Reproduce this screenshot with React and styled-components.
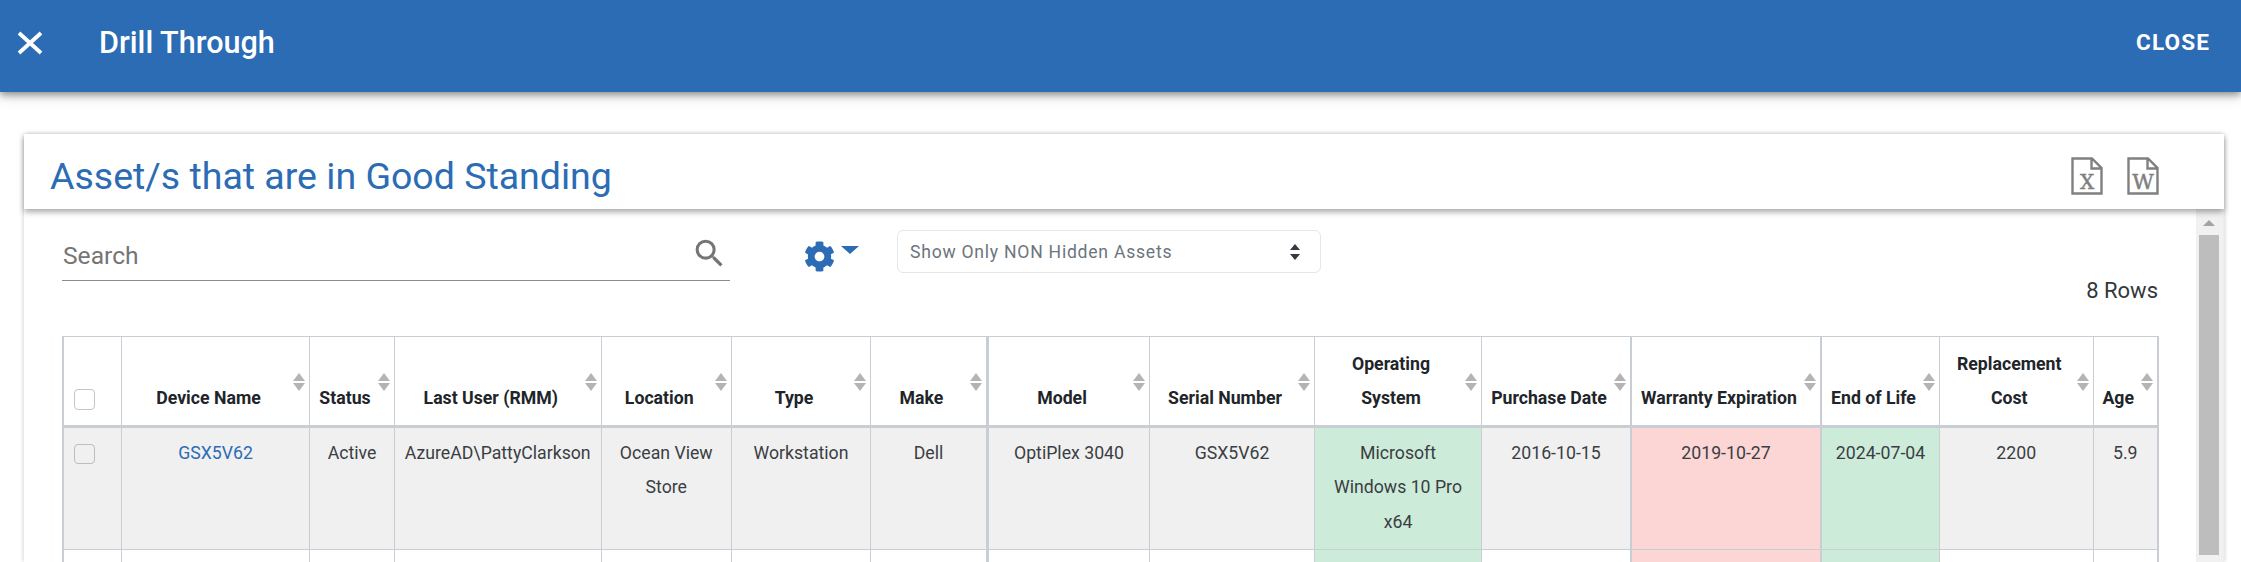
import React from "react";
import styled, { createGlobalStyle } from "styled-components";
import { MdSearch } from "react-icons/md";
import { FaCog } from "react-icons/fa";

const BLUE = "#2b6cb5";
const LINE = "#c9cdd4";

const Global = createGlobalStyle`
  html, body { margin: 0; padding: 0; background: #fff; overflow: hidden; }
  body { font-family: Roboto, "Liberation Sans", sans-serif; color: #212529; }
`;

const Page = styled.div`
  width: 2241px;
  height: 562px;
  overflow: hidden;
`;

const TopBar = styled.header`
  position: relative;
  z-index: 3;
  height: 92px;
  box-sizing: border-box;
  padding: 0 31px 7px 10px;
  display: flex;
  align-items: center;
  background: ${BLUE};
  color: #fff;
  box-shadow: 0 3px 7px rgba(0, 0, 0, 0.38), 0 6px 14px rgba(0, 0, 0, 0.1);
`;

const CloseSvg = styled.svg`
  width: 40px;
  height: 40px;
  flex: none;
`;

const BarTitle = styled.h1`
  margin: 0 0 0 49px;
  flex: 1;
  font-size: 30.6px;
  font-weight: 500;
  line-height: 40px;
`;

const CloseButton = styled.span`
  font-size: 22.6px;
  font-weight: 700;
  letter-spacing: 1.1px;
`;

const Card = styled.section`
  margin: 42px 17px 0 24px;
  border-radius: 4px 4px 0 0;
  box-shadow: 0 0 5px rgba(0, 0, 0, 0.22);
  background: #fff;
`;

const TitleBar = styled.div`
  position: relative;
  z-index: 2;
  height: 75px;
  box-sizing: border-box;
  padding: 8px 65px 0 26px;
  display: flex;
  align-items: center;
  background: #fff;
  box-shadow: 0 3px 6px rgba(0, 0, 0, 0.35);
`;

const CardTitle = styled.h2`
  margin: 0;
  flex: 1;
  font-size: 37.5px;
  font-weight: 400;
  color: ${BLUE};
`;

const Exports = styled.div`
  display: flex;
  gap: 24px;
`;

const FileSvg = styled.svg`
  width: 32px;
  height: 38px;
  display: block;
`;

const Body = styled.div`
  display: flex;
  height: 353px;
`;

const Content = styled.div`
  flex: 1;
  min-width: 0;
  padding: 21px 38px 0 38px;
`;

const Toolbar = styled.div`
  display: flex;
  align-items: flex-start;
  height: 51px;
`;

const SearchField = styled.div`
  width: 668px;
  height: 51px;
  box-sizing: border-box;
  padding: 0 0 0 1px;
  display: flex;
  align-items: center;
  justify-content: space-between;
  border-bottom: 1.5px solid #8c8c8c;
  color: #757575;
  font-size: 24.6px;
`;

const SearchIcon = styled(MdSearch)`
  width: 37px;
  height: 37px;
  margin-right: 2px;
  margin-top: -3px;
`;

const GearButton = styled.div`
  margin: 11px 0 0 74px;
  width: 93px;
  display: flex;
  align-items: flex-start;
  color: ${BLUE};
`;

const Gear = styled(FaCog)`
  width: 31px;
  height: 31px;
`;

const Caret = styled.span`
  margin: 5px 0 0 6px;
  border-left: 9px solid transparent;
  border-right: 9px solid transparent;
  border-top: 8px solid ${BLUE};
`;

const SelectBox = styled.div`
  width: 424px;
  height: 43px;
  box-sizing: border-box;
  padding: 0 19px 0 12px;
  display: flex;
  align-items: center;
  justify-content: space-between;
  border: 1.5px solid #e4e7ea;
  border-radius: 6px;
  color: #6c757d;
  font-size: 17.6px;
  letter-spacing: 0.75px;
`;

const RowCount = styled.div`
  height: 20px;
  margin: 0 0 35px 0;
  text-align: right;
  font-size: 22px;
  line-height: 20px;
  color: #33373b;
`;

const Table = styled.table`
  width: 2095px;
  table-layout: fixed;
  border-collapse: collapse;
  border-top: 1.5px solid ${LINE};
  border-left: 2px solid ${LINE};
  border-right: 2px solid ${LINE};
  font-size: 17.7px;
`;

const Col = styled.col`
  width: ${(p) => p.$w}px;
`;

const HeadCell = styled.th`
  position: relative;
  height: 90px;
  box-sizing: border-box;
  padding: 0 14px 10px 0;
  vertical-align: bottom;
  text-align: center;
  white-space: pre-line;
  font-weight: 700;
  line-height: 34px;
  color: #212529;
  border-left: ${(p) => p.$thick || 1}px solid ${LINE};
  border-bottom: 3px solid ${LINE};
`;

const SortGlyph = styled.svg`
  position: absolute;
  top: 36px;
  right: 4px;
  width: 12px;
  height: 18px;
`;

const Row = styled.tr`
  background: ${(p) => (p.$shaded ? "#f0f0f0" : "#fff")};
`;

const Cell = styled.td`
  box-sizing: border-box;
  height: ${(p) => (p.$blank ? 20 : 123)}px;
  padding: 8px 2px 0;
  vertical-align: top;
  text-align: center;
  white-space: pre-line;
  line-height: 34.4px;
  color: #3a3e43;
  background: ${(p) => (p.$tone === "green" ? "#cdebd9" : p.$tone === "red" ? "#fcd5d5" : "transparent")};
  border-left: ${(p) => p.$thick || 1}px solid ${LINE};
  border-bottom: 1.5px solid ${LINE};
`;

const Link = styled.span`
  color: ${BLUE};
`;

const Check = styled.span`
  display: block;
  box-sizing: border-box;
  width: 21px;
  height: ${(p) => (p.$head ? 21 : 20)}px;
  border: 1.5px solid ${(p) => (p.$head ? "#c4c4c4" : "#bdbdbd")};
  border-radius: 4px;
  background: ${(p) => (p.$head ? "#fff" : "#f0f0f0")};
`;

const CheckHead = styled(HeadCell)`
  padding: 0 0 15px 10px;
`;

const CheckCell = styled(Cell)`
  padding: 16px 0 0 10px;
`;

const Scrollbar = styled.div`
  flex: none;
  width: 28px;
  box-sizing: border-box;
  padding: 0 4px 0 3px;
  background: #f1f1f1;
  border-right: 1px solid #eee;
`;

const ScrollUp = styled.div`
  height: 26px;
  display: flex;
  align-items: center;
  justify-content: center;
  &::before {
    content: "";
    margin-top: 2px;
    border-left: 6px solid transparent;
    border-right: 6px solid transparent;
    border-bottom: 6px solid #a3a3a3;
  }
`;

const ScrollThumb = styled.div`
  height: 320px;
  background: #bdbdbd;
`;

const columns = [
  { w: 58.5, check: true },
  { w: 188, title: "Device Name", value: "GSX5V62", link: true },
  { w: 85, title: "Status", value: "Active" },
  { w: 206.5, title: "Last User (RMM)", value: "AzureAD\\PattyClarkson" },
  { w: 130.5, title: "Location", value: "Ocean View\nStore" },
  { w: 139, title: "Type", value: "Workstation" },
  { w: 117, title: "Make", value: "Dell" },
  { w: 162, title: "Model", value: "OptiPlex 3040", thick: 3 },
  { w: 165, title: "Serial Number", value: "GSX5V62" },
  { w: 167, title: "Operating\nSystem", value: "Microsoft\nWindows 10 Pro\nx64", tone: "green" },
  { w: 149.5, title: "Purchase Date", value: "2016-10-15" },
  { w: 190, title: "Warranty Expiration", value: "2019-10-27", tone: "red", thick: 2 },
  { w: 118.5, title: "End of Life", value: "2024-07-04", tone: "green", thick: 2 },
  { w: 153.5, title: "Replacement\nCost", value: "2200" },
  { w: 65, title: "Age", value: "5.9" },
];

const Sort = () => (
  <SortGlyph viewBox="0 0 12 18">
    <path d="M6 0 L12 8 H0 Z M0 10 H12 L6 18 Z" fill="#b4b4b4" />
  </SortGlyph>
);

const CloseIcon = () => (
  <CloseSvg viewBox="0 0 40 40">
    <path d="M9 10 L31 30 M31 10 L9 30" stroke="currentColor" strokeWidth="3.8" fill="none" />
  </CloseSvg>
);

const FileIcon = ({ letter }) => (
  <FileSvg viewBox="0 0 32 38">
    <path
      d="M1.5 1.5 H21 L30.5 11 V36.5 H1.5 Z M20.5 1.5 V11.5 H30.5"
      fill="none"
      stroke="#808080"
      strokeWidth="2.4"
    />
    <text
      x="16"
      y="32"
      textAnchor="middle"
      fontFamily="'DejaVu Serif', serif"
      fontWeight="400"
      fontSize={letter === "W" ? 21 : 20}
      fill="#808080"
      stroke="#808080"
      strokeWidth="0.5"
    >
      {letter}
    </text>
  </FileSvg>
);

export default function App() {
  return (
    <Page>
      <Global />
      <TopBar>
        <CloseIcon />
        <BarTitle>Drill Through</BarTitle>
        <CloseButton>CLOSE</CloseButton>
      </TopBar>
      <Card>
        <TitleBar>
          <CardTitle>Asset/s that are in Good Standing</CardTitle>
          <Exports>
            <FileIcon letter="X" />
            <FileIcon letter="W" />
          </Exports>
        </TitleBar>
        <Body>
          <Content>
            <Toolbar>
              <SearchField>
                Search
                <SearchIcon />
              </SearchField>
              <GearButton>
                <Gear />
                <Caret />
              </GearButton>
              <SelectBox>
                Show Only NON Hidden Assets
                <svg width="12" height="16" viewBox="0 0 12 16">
                  <path d="M6 0 L11 6 H1 Z M1 10 H11 L6 16 Z" fill="#343a40" />
                </svg>
              </SelectBox>
            </Toolbar>
            <RowCount>8 Rows</RowCount>
            <Table>
              <colgroup>
                {columns.map((c, i) => (
                  <Col key={i} $w={c.w} />
                ))}
              </colgroup>
              <thead>
                <tr>
                  {columns.map((c, i) =>
                    c.check ? (
                      <CheckHead key={i}>
                        <Check $head />
                      </CheckHead>
                    ) : (
                      <HeadCell key={i} $thick={c.thick}>
                        {c.title}
                        <Sort />
                      </HeadCell>
                    )
                  )}
                </tr>
              </thead>
              <tbody>
                <Row $shaded>
                  {columns.map((c, i) =>
                    c.check ? (
                      <CheckCell key={i}>
                        <Check />
                      </CheckCell>
                    ) : (
                      <Cell key={i} $tone={c.tone} $thick={c.thick}>
                        {c.link ? <Link>{c.value}</Link> : c.value}
                      </Cell>
                    )
                  )}
                </Row>
                <Row>
                  {columns.map((c, i) => (
                    <Cell key={i} $blank $tone={c.tone} $thick={c.thick} />
                  ))}
                </Row>
              </tbody>
            </Table>
          </Content>
          <Scrollbar>
            <ScrollUp />
            <ScrollThumb />
          </Scrollbar>
        </Body>
      </Card>
    </Page>
  );
}
